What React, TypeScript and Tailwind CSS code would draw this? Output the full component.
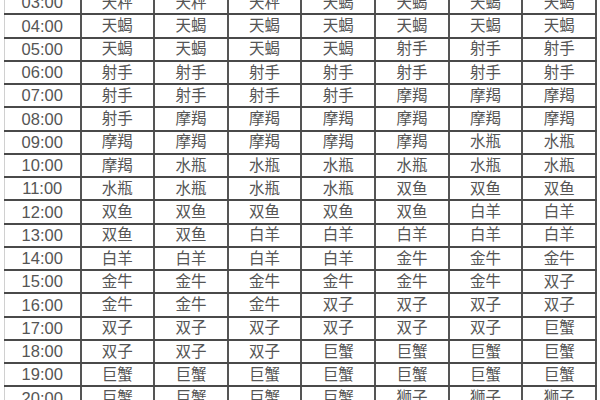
const rows: [string, string[]][] = [
  ['03:00', ['天秤', '天秤', '天秤', '天蝎', '天蝎', '天蝎', '天蝎']],
  ['04:00', ['天蝎', '天蝎', '天蝎', '天蝎', '天蝎', '天蝎', '天蝎']],
  ['05:00', ['天蝎', '天蝎', '天蝎', '天蝎', '射手', '射手', '射手']],
  ['06:00', ['射手', '射手', '射手', '射手', '射手', '射手', '射手']],
  ['07:00', ['射手', '射手', '射手', '射手', '摩羯', '摩羯', '摩羯']],
  ['08:00', ['射手', '摩羯', '摩羯', '摩羯', '摩羯', '摩羯', '摩羯']],
  ['09:00', ['摩羯', '摩羯', '摩羯', '摩羯', '摩羯', '水瓶', '水瓶']],
  ['10:00', ['摩羯', '水瓶', '水瓶', '水瓶', '水瓶', '水瓶', '水瓶']],
  ['11:00', ['水瓶', '水瓶', '水瓶', '水瓶', '双鱼', '双鱼', '双鱼']],
  ['12:00', ['双鱼', '双鱼', '双鱼', '双鱼', '双鱼', '白羊', '白羊']],
  ['13:00', ['双鱼', '双鱼', '白羊', '白羊', '白羊', '白羊', '白羊']],
  ['14:00', ['白羊', '白羊', '白羊', '白羊', '金牛', '金牛', '金牛']],
  ['15:00', ['金牛', '金牛', '金牛', '金牛', '金牛', '金牛', '双子']],
  ['16:00', ['金牛', '金牛', '金牛', '双子', '双子', '双子', '双子']],
  ['17:00', ['双子', '双子', '双子', '双子', '双子', '双子', '巨蟹']],
  ['18:00', ['双子', '双子', '双子', '巨蟹', '巨蟹', '巨蟹', '巨蟹']],
  ['19:00', ['巨蟹', '巨蟹', '巨蟹', '巨蟹', '巨蟹', '巨蟹', '巨蟹']],
  ['20:00', ['巨蟹', '巨蟹', '巨蟹', '巨蟹', '狮子', '狮子', '狮子']],
];

export default function App() {
  return (
    <div className="w-[600px] h-[400px] overflow-hidden bg-white">
      {/* table starts above the top edge, first row is cut */}
      <table className="ml-[4px] mt-[-10px] w-[593px] table-fixed border-collapse text-center text-[#555] font-['Liberation_Sans','Noto_Sans_CJK_SC',sans-serif]">
        <colgroup>
          <col className="w-[76px]" />
          <col />
          <col />
          <col />
          <col />
          <col />
          <col />
          <col />
        </colgroup>
        <tbody>
          {rows.map(([time, signs]) => (
            <tr key={time} className="h-[23.25px]">
              <td className="p-0 border-y-2 border-y-[#4a4a4a] border-l border-l-[#d0d0d0] border-r-2 border-r-[#555] text-[16.5px] leading-none">
                {time}
              </td>
              {signs.map((s, i) => (
                <td key={i} className="p-0 border-y-2 border-y-[#4a4a4a] border-r-2 border-r-[#555] text-[15.5px] leading-none">
                  {s}
                </td>
              ))}
            </tr>
          ))}
        </tbody>
      </table>
    </div>
  );
}
